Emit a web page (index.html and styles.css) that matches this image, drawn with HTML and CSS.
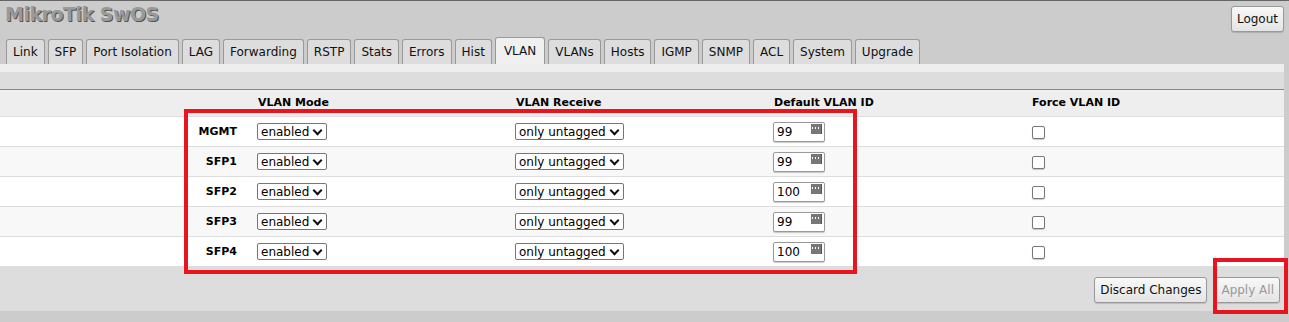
FILE: index.html
```html
<!DOCTYPE html>
<html lang="en">
<head>
  <meta charset="UTF-8">
  <title>MikroTik SwOS - VLAN</title>
  <link rel="stylesheet" href="styles.css">
</head>
<body>

  <div class="header">
    <div class="logo">MikroTik SwOS</div>
    <button class="btn logout">Logout</button>
  </div>

  <div class="tabs">
    <div class="tab">Link</div>
    <div class="tab">SFP</div>
    <div class="tab">Port Isolation</div>
    <div class="tab">LAG</div>
    <div class="tab">Forwarding</div>
    <div class="tab">RSTP</div>
    <div class="tab">Stats</div>
    <div class="tab">Errors</div>
    <div class="tab">Hist</div>
    <div class="tab active">VLAN</div>
    <div class="tab">VLANs</div>
    <div class="tab">Hosts</div>
    <div class="tab">IGMP</div>
    <div class="tab">SNMP</div>
    <div class="tab">ACL</div>
    <div class="tab">System</div>
    <div class="tab">Upgrade</div>
  </div>

  <div class="page">
    <div class="toolbar"></div>
    <table class="grid">
      <colgroup>
        <col class="col-name">
        <col class="col-field">
        <col class="col-field">
        <col class="col-field">
        <col>
      </colgroup>
      <thead>
        <tr>
          <th class="name"></th>
          <th>VLAN Mode</th>
          <th>VLAN Receive</th>
          <th>Default VLAN ID</th>
          <th>Force VLAN ID</th>
        </tr>
      </thead>
      <tbody>
        <tr>
          <td class="name">MGMT</td>
          <td><span class="select">enabled</span></td>
          <td><span class="select">only untagged</span></td>
          <td><span class="number">99<i class="spin"></i></span></td>
          <td><span class="check"></span></td>
        </tr>
        <tr>
          <td class="name">SFP1</td>
          <td><span class="select">enabled</span></td>
          <td><span class="select">only untagged</span></td>
          <td><span class="number">99<i class="spin"></i></span></td>
          <td><span class="check"></span></td>
        </tr>
        <tr>
          <td class="name">SFP2</td>
          <td><span class="select">enabled</span></td>
          <td><span class="select">only untagged</span></td>
          <td><span class="number">100<i class="spin"></i></span></td>
          <td><span class="check"></span></td>
        </tr>
        <tr>
          <td class="name">SFP3</td>
          <td><span class="select">enabled</span></td>
          <td><span class="select">only untagged</span></td>
          <td><span class="number">99<i class="spin"></i></span></td>
          <td><span class="check"></span></td>
        </tr>
        <tr>
          <td class="name">SFP4</td>
          <td><span class="select">enabled</span></td>
          <td><span class="select">only untagged</span></td>
          <td><span class="number">100<i class="spin"></i></span></td>
          <td><span class="check"></span></td>
        </tr>
      </tbody>
    </table>
    <div class="actions">
      <button class="btn">Discard Changes</button>
      <button class="btn" disabled>Apply All</button>
    </div>
  </div>

  <div class="mark mark-table"></div>
  <div class="mark mark-apply"></div>

</body>
</html>
```

FILE: styles.css
```css
body {
  font-family: 'DejaVu Sans', Verdana, sans-serif;
  font-size: 11px;
  background-color: #ccc;
  margin: 0;
  border-top: 1px solid #666;
  color: #000;
  position: relative;
  height: 321px;
  overflow: hidden;
}

.header {
  display: flex;
  justify-content: space-between;
  align-items: flex-start;
  padding: 2px 5px 0 5px;
  height: 34px;
}

.logo {
  font-size: 19px;
  font-weight: bold;
  color: #999;
  text-shadow: 1px 1px 0 #555;
  letter-spacing: -0.5px;
  line-height: 22px;
}

.btn {
  font-family: 'DejaVu Sans', Verdana, sans-serif;
  font-size: 12px;
  height: 26px;
  padding: 0 5px;
  border: 1px solid #999;
  border-radius: 3px;
  background: linear-gradient(#f8f8f8, #e4e4e4);
  color: #111;
  box-shadow: 0 1px 1px rgba(0, 0, 0, 0.15);
}

.btn:disabled {
  color: #999;
}

.logout {
  margin-top: 3px;
}

.tabs {
  display: flex;
  align-items: flex-end;
  gap: 3px;
  padding-left: 6px;
  height: 27px;
}

.tab {
  font-size: 12px;
  height: 24px;
  line-height: 24px;
  padding: 0 6px;
  border: 1px solid #999;
  border-bottom: none;
  border-radius: 3px 3px 0 0;
  background-color: #ddd;
  color: #111;
}

.tab.active {
  background-color: #f0f0f0;
  height: 26px;
  line-height: 27px;
  padding: 0 8px;
}

.page {
  background-color: #eee;
  margin-right: 5px;
  padding-top: 8px;
}

.toolbar {
  background-color: #ddd;
  height: 17px;
  border-bottom: 1px solid #888;
}

.grid {
  width: 100%;
  border-collapse: collapse;
  table-layout: fixed;
}

.col-name {
  width: 257px;
}

.col-field {
  width: 258px;
}

.grid th {
  font-weight: bold;
  text-align: left;
  height: 26px;
  padding: 0 0 0 1px;
  vertical-align: middle;
  line-height: 20px;
  border-bottom: 1px solid #ddd;
}

.grid th.name,
.grid td.name {
  text-align: right;
  padding-right: 20px;
}

.grid td {
  height: 29px;
  padding: 0;
  border-bottom: 1px solid #ddd;
  background-color: #fff;
}

.grid td.name {
  font-weight: bold;
}

.grid tbody tr:nth-child(even) td {
  background-color: #f8f8f8;
}

.grid tbody tr:last-child td {
  border-bottom: none;
}

.select {
  display: inline-flex;
  align-items: center;
  height: 15px;
  padding: 0 3px;
  border: 1px solid #767676;
  border-radius: 2px;
  background-color: #fff;
  font-size: 12px;
  vertical-align: 1px;
}

.select::after {
  content: '';
  width: 5px;
  height: 5px;
  margin: -3px 2px 0 5px;
  border-right: 2px solid #111;
  border-bottom: 2px solid #111;
  transform: rotate(45deg);
}

.number {
  display: inline-flex;
  align-items: center;
  justify-content: space-between;
  width: 45px;
  height: 18px;
  padding: 0 2px 0 3px;
  border: 1px solid #999;
  border-radius: 2px;
  background-color: #fff;
  box-shadow: 0 1px 1px rgba(0, 0, 0, 0.2);
  font-size: 12px;
}

.spin {
  width: 10px;
  height: 10px;
  margin-bottom: 5px;
  background: radial-gradient(circle, #fff 0.8px, transparent 1.1px) 0 2px / 3px 4px repeat-x, #777;
  border-right: 1px solid #555;
}

.check {
  display: inline-block;
  width: 11px;
  height: 11px;
  margin-left: 1px;
  margin-top: 4px;
  border: 1px solid #777;
  border-radius: 2px;
  background-color: #fff;
  box-shadow: 0 1px 1px rgba(0, 0, 0, 0.2);
}

.actions {
  display: flex;
  justify-content: flex-end;
  gap: 8px;
  background-color: #ddd;
  padding: 10px 4px 8px 0;
  border-top: 1px solid #ddd;
}

.mark {
  position: absolute;
  border: 4px solid #e8141f;
}

.mark-table {
  left: 184px;
  top: 108px;
  width: 665px;
  height: 157px;
}

.mark-apply {
  left: 1213px;
  top: 257px;
  width: 67px;
  height: 48px;
}
```
